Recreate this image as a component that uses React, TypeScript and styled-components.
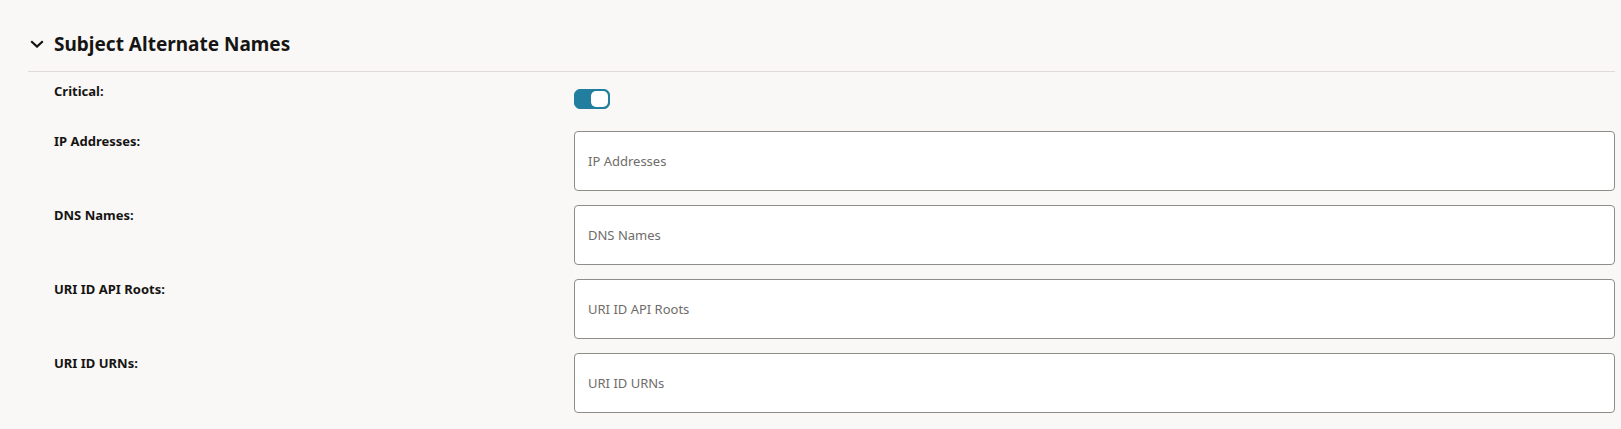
import * as React from 'react';
import styled, { createGlobalStyle } from 'styled-components';

const GlobalStyle = createGlobalStyle`
    body {
        margin: 0;
        background-color: #f9f8f6;
        font-family: "Noto Sans", "Open Sans", sans-serif;
        color: #161513;
    }
`;

const Section = styled.section`
    padding: 0 6px 0 28px;
`;

const SectionHeader = styled.div`
    display: flex;
    align-items: center;
    height: 72px;
    padding-top: 16px;
    box-sizing: border-box;
    border-bottom: 1px solid #dfdcd8;
    cursor: pointer;
`;

const Chevron = styled.svg`
    width: 14px;
    height: 8px;
    margin-left: 2px;
    margin-right: 10px;
`;

const SectionTitle = styled.h2`
    margin: 0;
    font-size: 19px;
    font-weight: 700;
    line-height: 28px;
`;

const Form = styled.div`
    display: grid;
    grid-template-columns: 520px 1fr;
    row-gap: 14px;
    padding: 9px 0 0 26px;
`;

const Label = styled.label`
    font-size: 13px;
    font-weight: 700;
    line-height: 16px;
    padding-top: 2px;
`;

const ToggleCell = styled.div`
    height: 36px;
    display: flex;
    align-items: center;
`;

const Toggle = styled.button<{ $on: boolean }>`
    position: relative;
    width: 36px;
    height: 20px;
    padding: 0;
    border: 1px solid #227e9e;
    border-radius: 6px;
    background-color: ${(p) => (p.$on ? '#227e9e' : '#ffffff')};
    cursor: pointer;
`;

const Knob = styled.span<{ $on: boolean }>`
    position: absolute;
    top: 1px;
    left: ${(p) => (p.$on ? '16px' : '1px')};
    width: 17px;
    height: 16px;
    border-radius: 5px;
    background-color: #ffffff;
`;

const TextInput = styled.input`
    box-sizing: border-box;
    width: 100%;
    height: 60px;
    padding: 0 13px;
    border: 1px solid #8f8d8a;
    border-radius: 4px;
    background-color: #ffffff;
    font-family: "Noto Sans", "Open Sans", sans-serif;
    font-size: 13px;
    color: #161513;
    outline: none;
    &::placeholder {
        color: #6f6c69;
    }
`;

const fields = ['IP Addresses', 'DNS Names', 'URI ID API Roots', 'URI ID URNs'];

export default function App() {
    const [critical, setCritical] = React.useState(true);
    return (
        <>
            <GlobalStyle />
            <Section>
                <SectionHeader>
                    <Chevron viewBox="0 0 14 8" fill="none">
                        <path d="M1.2 1.2 L7 6.6 L12.8 1.2" stroke="#161513" strokeWidth="2.2" />
                    </Chevron>
                    <SectionTitle>Subject Alternate Names</SectionTitle>
                </SectionHeader>
                <Form>
                    <Label>Critical:</Label>
                    <ToggleCell>
                        <Toggle $on={critical} onClick={() => setCritical(!critical)}>
                            <Knob $on={critical} />
                        </Toggle>
                    </ToggleCell>
                    {fields.map((f) => (
                        <React.Fragment key={f}>
                            <Label>{f}:</Label>
                            <TextInput placeholder={f} />
                        </React.Fragment>
                    ))}
                </Form>
            </Section>
        </>
    );
}
